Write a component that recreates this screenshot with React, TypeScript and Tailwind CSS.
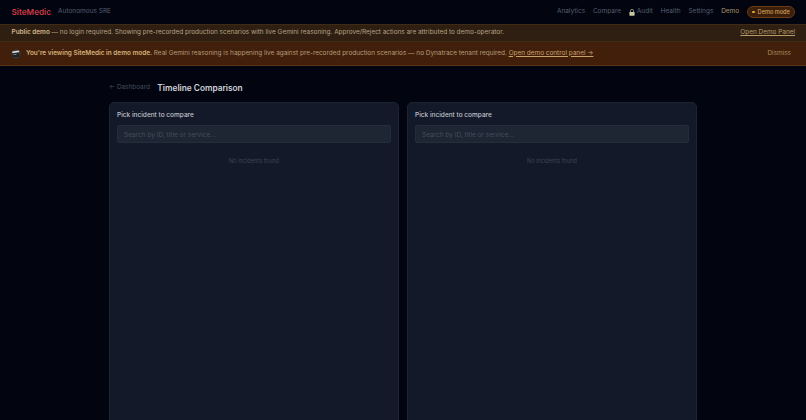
function Clapper() {
  return (
    <svg width="10" height="10" viewBox="0 0 10 10" className="shrink-0">
      <circle cx="5" cy="5" r="4.6" fill="#3a3a3c" />
      <path d="M1.2 2.6 L8 1.4 L8.3 3 L1.5 4.2 Z" fill="#d9dadd" />
      <rect x="1.6" y="4.4" width="6.8" height="3.6" fill="#1f2023" />
      <rect x="2.4" y="5" width="3" height="0.7" fill="#9ca3af" />
    </svg>
  );
}

function Lock() {
  return (
    <svg width="6" height="7" viewBox="0 0 6 7" className="shrink-0">
      <path d="M1.4 3 V2 a1.6 1.6 0 0 1 3.2 0 V3" fill="none" stroke="#a8a99a" strokeWidth="0.8" />
      <rect x="0.4" y="3" width="5.2" height="3.7" rx="0.6" fill="#c9c8a0" />
    </svg>
  );
}

function Panel() {
  return (
    <div className="flex-1 h-[340px] rounded-[5px] border border-[#1e2532] bg-[#131928] px-[7px] pt-[7px]">
      <div className="text-[6.5px] leading-[10px] font-medium text-[#c0c4cd]">Pick incident to compare</div>
      <div className="mt-[5px] h-[18px] rounded-[2px] border border-[#262d3a] bg-[#1e2533] px-[6px] flex items-center text-[6.5px] leading-[18px] text-[#454e5e]">
        <span className="relative top-[1px]">Search by ID, title or service...</span>
      </div>
      <div className="mt-[13px] text-center text-[5.6px] leading-[10px] text-[#3d4554]">No incidents found</div>
    </div>
  );
}

export default function App() {
  return (
    <div className="h-[420px] w-[806px] overflow-hidden bg-[#02040f] opacity-[0.995] antialiased font-['Inter',sans-serif]">
      <nav className="h-6 flex items-center justify-between pl-[11.5px] pr-[11px]">
        <div className="flex items-center gap-[7px]">
          <span className="text-[8.2px] font-semibold text-[#c93a46]">SiteMedic</span>
          <span className="text-[6.5px] text-[#565f70]">Autonomous SRE</span>
        </div>
        <div className="flex items-center gap-[7.8px] text-[6.5px] text-[#565f70]">
          <span>Analytics</span>
          <span>Compare</span>
          <span className="flex items-center gap-[2px]"><Lock />Audit</span>
          <span>Health</span>
          <span>Settings</span>
          <span className="text-[#a8916a]">Demo</span>
          <span className="h-3 w-[48px] justify-center flex items-center gap-[3px] rounded-full border border-[#6b3c12] bg-[#3b1f0a] text-[5.6px] font-medium text-[#d6a25c]">
            <span className="w-[2.5px] h-[2.5px] rounded-full bg-[#f0a830]" />
            Demo mode
          </span>
        </div>
      </nav>
      <div className="h-[18px] flex items-center justify-between border-y border-[#3f2a14] bg-[#2f1f12] pl-[11.5px] pr-[11px] text-[6.43px] text-[#b3a284]">
        <span><b className="font-semibold text-[#cdb48a]">Public demo</b> — no login required. Showing pre-recorded production scenarios with live Gemini reasoning. Approve/Reject actions are attributed to demo-operator.</span>
        <span className="underline text-[#b89a66]">Open Demo Panel</span>
      </div>
      <div className="h-[24px] flex items-center justify-between border-b border-[#5a3414] bg-[#421f0b] pl-[11px] pr-[15px] text-[6.43px] text-[#b39c78]">
        <span className="flex items-center gap-[5px]">
          <Clapper />
          <span><b className="font-semibold text-[#d4b078]">You're viewing SiteMedic in demo mode.</b> Real Gemini reasoning is happening live against pre-recorded production scenarios — no Dynatrace tenant required. <span className="underline text-[#c6a26a]">Open demo control panel →</span></span>
        </span>
        <span className="text-[#a88a5c]">Dismiss</span>
      </div>
      <main className="w-[588px] mx-auto">
        <div className="h-[36px] flex items-center gap-[7.5px] pt-[8px]">
          <span className="text-[6.4px] text-[#454e5e]">← Dashboard</span>
          <span className="text-[8.3px] font-semibold text-[#d0d3da]">Timeline Comparison</span>
        </div>
        <div className="flex gap-2">
          <Panel />
          <Panel />
        </div>
      </main>
    </div>
  );
}
